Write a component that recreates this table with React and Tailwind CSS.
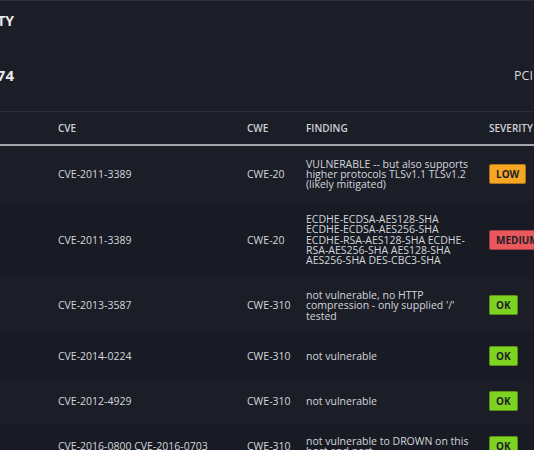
import React from "react";

const rows = [
  {
    cve: "CVE-2011-3389",
    cwe: "CWE-20",
    finding: "VULNERABLE -- but also supports higher protocols TLSv1.1 TLSv1.2 (likely mitigated)",
    severity: "LOW",
  },
  {
    cve: "CVE-2011-3389",
    cwe: "CWE-20",
    finding:
      "ECDHE-ECDSA-AES128-SHA ECDHE-ECDSA-AES256-SHA ECDHE-RSA-AES128-SHA ECDHE-RSA-AES256-SHA AES128-SHA AES256-SHA DES-CBC3-SHA",
    severity: "MEDIUM",
  },
  {
    cve: "CVE-2013-3587",
    cwe: "CWE-310",
    finding: "not vulnerable, no HTTP compression - only supplied '/' tested",
    severity: "OK",
  },
  { cve: "CVE-2014-0224", cwe: "CWE-310", finding: "not vulnerable", severity: "OK" },
  { cve: "CVE-2012-4929", cwe: "CWE-310", finding: "not vulnerable", severity: "OK" },
  {
    cve: "CVE-2016-0800 CVE-2016-0703",
    cwe: "CWE-310",
    finding: "not vulnerable to DROWN on this host and port",
    severity: "OK",
  },
];

function Badge({ level }) {
  const color =
    level === "LOW"
      ? "bg-[#f6a623]"
      : level === "MEDIUM"
      ? "bg-[#e9585d]"
      : "bg-[#7ed321]";
  return (
    <span
      className={`inline-flex h-[20px] items-center rounded-[2px] border border-black/30 px-[6px] text-[10px] font-bold text-[#1b1e27] ${color}`}
    >
      {level}
    </span>
  );
}

export default function App() {
  return (
    <div
      className="h-[450px] w-[534px] overflow-hidden bg-[#1b1e27] text-[#d4d6db]"
      style={{ fontFamily: '"Open Sans", "Noto Sans", sans-serif' }}
    >
      <div className="border-t border-[#2c2f39]">
        <div className="flex h-[110px] flex-col">
          <div className="-ml-[110px] mt-[12px] w-[124px] text-right text-[14px] font-bold leading-[16px] text-[#e8e9ec]">
            VULNERABILITY
          </div>
          <div className="mt-[38px] flex items-end">
            <div className="-ml-[60px] w-[74px] text-right text-[15px] font-bold leading-[16px] text-[#e8e9ec]">
              1774
            </div>
            <div className="ml-auto mr-[-40px] w-[60px] whitespace-nowrap text-[12.5px] leading-[14px] text-[#d8dade]">
              PCI DSS
            </div>
          </div>
        </div>
      </div>

      <div className="border-t border-[#2a2d37]">
        <div className="grid h-[34px] grid-cols-[58px_189px_59px_183px_1fr] items-center border-b-2 border-[#a4a6ab] text-[10px] font-semibold text-[#cfd1d6]">
          <div />
          <div>CVE</div>
          <div>CWE</div>
          <div>FINDING</div>
          <div>SEVERITY</div>
        </div>

        {rows.map((r, i) => (
          <div
            key={i}
            className={`grid grid-cols-[58px_189px_59px_183px_1fr] items-center py-[12.5px] text-[10.5px] leading-[10.2px] ${
              i % 2 === 0 ? "bg-[#1b1e27]" : "bg-[#181b23]"
            }`}
          >
            <div />
            <div className="whitespace-nowrap">{r.cve}</div>
            <div>{r.cwe}</div>
            <div className="w-[168px] break-words">{r.finding}</div>
            <div className="whitespace-nowrap">
              <Badge level={r.severity} />
            </div>
          </div>
        ))}
      </div>
    </div>
  );
}
